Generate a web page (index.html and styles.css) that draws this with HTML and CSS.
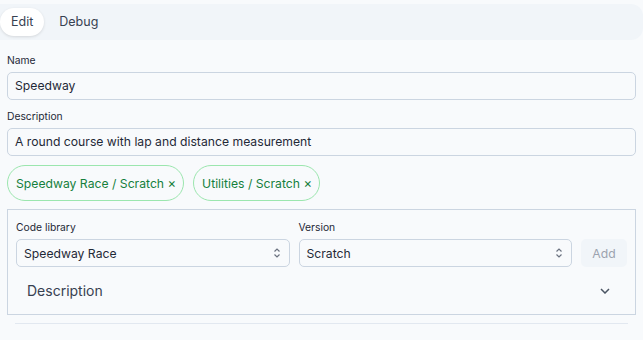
FILE: index.html
```html
<!DOCTYPE html>
<html lang="en">
<head>
  <meta charset="UTF-8" />
  <title>Speedway</title>
  <link rel="stylesheet" href="styles.css">
</head>
<body>
  <div class="tabs">
    <div class="tab active">Edit</div>
    <div class="tab">Debug</div>
  </div>

  <div class="form">
    <div class="field">
      <label class="label">Name</label>
      <div class="input">Speedway</div>
    </div>
    <div class="field">
      <label class="label">Description</label>
      <div class="input">A round course with lap and distance measurement</div>
    </div>
    <div class="tags">
      <span class="tag">Speedway Race / Scratch <span class="x">×</span></span>
      <span class="tag">Utilities / Scratch <span class="x">×</span></span>
    </div>

    <div class="box">
      <div class="row">
        <div class="col">
          <label class="label">Code library</label>
          <div class="select">Speedway Race
            <svg class="updown" width="8" height="12" viewBox="0 0 8 12"><path d="M1.5 4.5 L4 2 L6.5 4.5 M1.5 7.5 L4 10 L6.5 7.5" fill="none" stroke="#6b7280" stroke-width="1.2"/></svg>
          </div>
        </div>
        <div class="col">
          <label class="label">Version</label>
          <div class="select">Scratch
            <svg class="updown" width="8" height="12" viewBox="0 0 8 12"><path d="M1.5 4.5 L4 2 L6.5 4.5 M1.5 7.5 L4 10 L6.5 7.5" fill="none" stroke="#6b7280" stroke-width="1.2"/></svg>
          </div>
        </div>
        <button class="add">Add</button>
      </div>
      <div class="collapse">
        <span>Description</span>
        <svg width="10" height="6" viewBox="0 0 10 6"><path d="M1 1 L5 5 L9 1" fill="none" stroke="#4b5563" stroke-width="1.5"/></svg>
      </div>
    </div>
    <div class="rule"></div>
  </div>
</body>
</html>
```

FILE: styles.css
```css
body {
  margin: 0;
  background: #f8fafc;
  font-family: Inter, "Noto Sans", sans-serif;
  color: #1f2937;
}
.tabs {
  margin-top: 4px;
  height: 36px;
  background: #f1f5f9;
  border-radius: 0 12px 12px 0;
  display: flex;
  align-items: center;
  gap: 4px;
}
.tab {
  height: 28px;
  line-height: 28px;
  padding: 0 11px;
  font-size: 12.5px;
  color: #374151;
  border-radius: 14px;
}
.tab.active {
  background: #fff;
  box-shadow: 0 1px 3px rgba(0, 0, 0, 0.12);
}
.form {
  padding: 12px 7px 0;
  display: flex;
  flex-direction: column;
  gap: 8px;
}
.field {
  display: flex;
  flex-direction: column;
}
.label {
  font-size: 10.3px;
  line-height: 16px;
  margin-bottom: 4px;
  color: #1f2937;
}
.input {
  height: 26px;
  line-height: 26px;
  border: 1px solid #cbd5e1;
  border-radius: 5px;
  background: #f8fafc;
  padding: 0 7px;
  font-size: 12.2px;
  color: #1f2937;
}
.tags {
  display: flex;
  gap: 9px;
  margin-top: 1px;
}
.tag {
  height: 34px;
  line-height: 34px;
  padding: 0 7px 0 8px;
  border: 1px solid #9be6ae;
  border-radius: 18px;
  color: #15803d;
  font-size: 12.2px;
}
.tag .x {
  font-size: 13px;
}
.box {
  border: 1px solid #cbd5e1;
  padding: 9px 8px 0;
}
.row {
  display: flex;
  gap: 9px;
  align-items: flex-end;
}
.col {
  flex: 1;
  display: flex;
  flex-direction: column;
}
.select {
  height: 26px;
  border: 1px solid #cbd5e1;
  border-radius: 5px;
  padding: 0 8px 0 7px;
  font-size: 12.2px;
  display: flex;
  align-items: center;
  justify-content: space-between;
  color: #1f2937;
}
.add {
  width: 46px;
  height: 28px;
  border: none;
  border-radius: 5px;
  background: #f1f5f9;
  color: #9ca3af;
  font-family: inherit;
  font-size: 12.2px;
}
.collapse {
  height: 47px;
  display: flex;
  align-items: center;
  justify-content: space-between;
  padding: 0 17px 0 11px;
  font-size: 14px;
  color: #374151;
}
.rule {
  margin: 0 8px;
  border-top: 1px solid #e2e8f0;
}
```
